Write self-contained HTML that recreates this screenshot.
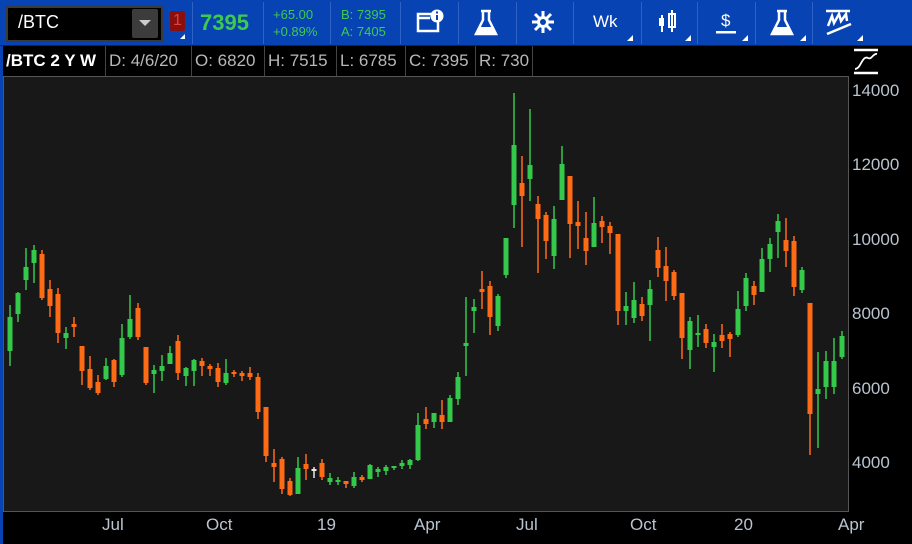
<!DOCTYPE html>
<html><head><meta charset="utf-8"><style>
*{margin:0;padding:0;box-sizing:border-box}
body{width:912px;height:544px;background:#000;position:relative;overflow:hidden;font-family:"Liberation Sans",sans-serif}
.tb{position:absolute;left:0;top:0;width:912px;height:45px;background:#0743b3}
.sep{position:absolute;top:2px;width:1px;height:42px;background:#2f62c4}
.abs{position:absolute}
.tri{position:absolute;width:0;height:0;border-left:6px solid transparent;border-bottom:6px solid #fff}
.r2{position:absolute;top:46px;height:30px;left:3px;width:845px;background:#000}
.cell{position:absolute;top:0;height:30px;line-height:30px;font-size:17px;color:#b8b8b8;border-right:1px solid #444;padding-left:3px}
.yl{position:absolute;left:852px;font-size:17px;color:#b9c4d0}
.xl{position:absolute;top:515px;font-size:17px;color:#b9c4d0}
</style></head><body>
<div class="tb"></div>
<div class="abs" style="left:6px;top:6px;width:157px;height:36px;background:#000;border:2px solid #3a3a3a;border-radius:2px"></div>
<div class="abs" style="left:18px;top:12px;font-size:18px;color:#fff">/BTC</div>
<div class="abs" style="left:132px;top:9px;width:26px;height:29px;background:#3c3c3c;border-radius:2px"></div>
<div class="abs" style="left:139px;top:20px;width:0;height:0;border-left:6px solid transparent;border-right:6px solid transparent;border-top:6px solid #ccc"></div>
<div class="abs" style="left:170px;top:11px;width:15px;height:20px;background:#8a1010;border-radius:2px;color:#e04040;font-size:16px;text-align:center;line-height:20px">1</div>
<div class="tri" style="left:180px;top:34px;border-left-width:5px;border-bottom-width:5px"></div>
<div class="sep" style="left:192px"></div>
<div class="abs" style="left:200px;top:10px;font-size:22px;font-weight:bold;color:#3ec94f">7395</div>
<div class="sep" style="left:263px"></div>
<div class="abs" style="left:273px;top:6px;font-size:13px;color:#3ec94f;line-height:17px">+65.00<br>+0.89%</div>
<div class="sep" style="left:330px"></div>
<div class="abs" style="left:341px;top:6px;font-size:13px;color:#3ec94f;line-height:17px">B: 7395<br>A: 7405</div>
<div class="sep" style="left:400px"></div>
<!-- info icon -->
<svg class="abs" style="left:416px;top:8px" width="30" height="28" viewBox="0 0 30 28"><rect x="2" y="6" width="20" height="17" fill="none" stroke="#fff" stroke-width="2.5"/><line x1="2" y1="10" x2="14" y2="10" stroke="#fff" stroke-width="2.5"/><circle cx="21" cy="8" r="6.5" fill="#fff"/><rect x="20" y="7" width="2" height="5" fill="#0743b3"/><rect x="20" y="3.5" width="2" height="2" fill="#0743b3"/></svg>
<div class="sep" style="left:458px"></div>
<svg class="abs" style="left:472px;top:8px" width="30" height="30" viewBox="0 0 30 30"><path d="M9 3h10M11 3v9L4 26h20L17 12V3" fill="none" stroke="#fff" stroke-width="2.5"/><path d="M7 19h14l4 8H3z" fill="#fff"/></svg>
<div class="sep" style="left:516px"></div>
<svg class="abs" style="left:530px;top:9px" width="26" height="26" viewBox="0 0 26 26"><g stroke="#fff" stroke-width="3"><line x1="13" y1="2" x2="13" y2="24"/><line x1="2" y1="13" x2="24" y2="13"/><line x1="5" y1="5" x2="21" y2="21"/><line x1="21" y1="5" x2="5" y2="21"/></g><circle cx="13" cy="13" r="6" fill="#fff"/><circle cx="13" cy="13" r="3" fill="#0743b3"/></svg>
<div class="sep" style="left:573px"></div>
<div class="abs" style="left:593px;top:12px;font-size:17px;color:#fff">Wk</div>
<div class="tri" style="left:627px;top:35px"></div>
<div class="sep" style="left:641px"></div>
<svg class="abs" style="left:656px;top:10px" width="24" height="26" viewBox="0 0 24 26"><g fill="#fff"><rect x="3" y="8" width="5" height="8"/><rect x="5" y="5" width="2" height="17"/><rect x="13" y="4" width="6" height="13" fill="none" stroke="#fff" stroke-width="2"/><rect x="15" y="0" width="2" height="22"/></g></svg>
<div class="tri" style="left:685px;top:35px"></div>
<div class="sep" style="left:697px"></div>
<svg class="abs" style="left:714px;top:10px" width="26" height="26" viewBox="0 0 26 26"><text x="7" y="16" font-size="17" fill="#fff" font-family="Liberation Sans">$</text><rect x="2" y="21" width="20" height="2.5" fill="#fff"/></svg>
<div class="tri" style="left:742px;top:35px"></div>
<div class="sep" style="left:755px"></div>
<svg class="abs" style="left:768px;top:8px" width="30" height="30" viewBox="0 0 30 30"><path d="M9 3h10M11 3v9L4 26h20L17 12V3" fill="none" stroke="#fff" stroke-width="2.5"/><path d="M7 19h14l4 8H3z" fill="#fff"/></svg>
<div class="tri" style="left:800px;top:35px"></div>
<div class="sep" style="left:812px"></div>
<svg class="abs" style="left:826px;top:8px" width="30" height="30" viewBox="0 0 30 30"><g stroke="#fff" stroke-width="2.5" fill="none"><line x1="0" y1="3" x2="24" y2="3"/><path d="M2 18L6 8l2 7 5-9 2 7 5-7 1 7"/><line x1="1" y1="26" x2="25" y2="16"/></g></svg>
<div class="tri" style="left:857px;top:35px"></div>
<!-- row 2 -->
<div class="abs" style="left:0;top:45px;width:912px;height:1px;background:#222"></div>
<div class="r2">
<div class="cell" style="left:0;width:103px;color:#fff;font-weight:bold">/BTC 2 Y W</div>
<div class="cell" style="left:103px;width:86px">D: 4/6/20</div>
<div class="cell" style="left:189px;width:73px">O: 6820</div>
<div class="cell" style="left:262px;width:72px">H: 7515</div>
<div class="cell" style="left:334px;width:69px">L: 6785</div>
<div class="cell" style="left:403px;width:70px">C: 7395</div>
<div class="cell" style="left:473px;width:57px">R: 730</div>
</div>
<svg class="abs" style="left:852px;top:48px" width="32" height="28" viewBox="0 0 32 28"><g stroke="#fff" stroke-width="2.5" fill="none"><line x1="2" y1="2" x2="26" y2="2"/><line x1="2" y1="25" x2="26" y2="25"/><path d="M3 21C9 21 10 7 16 10c4 2 5-5 9-4" stroke-width="1.8"/></g></svg>
<div class="abs" style="left:0;top:46px;width:3px;height:498px;background:#0743b3"></div>
<!-- chart -->
<svg class="abs" style="left:0;top:0" width="912" height="544" id="ch">
<rect x="3.5" y="76.5" width="845" height="435" fill="#181818" stroke="#555"/>
<g id="cd"></g>
</svg>
<div class="yl" style="top:81px">14000</div>
<div class="yl" style="top:155px">12000</div>
<div class="yl" style="top:230px">10000</div>
<div class="yl" style="top:304px">8000</div>
<div class="yl" style="top:379px">6000</div>
<div class="yl" style="top:453px">4000</div>
<div class="xl" style="left:102px">Jul</div>
<div class="xl" style="left:206px">Oct</div>
<div class="xl" style="left:317px">19</div>
<div class="xl" style="left:414px">Apr</div>
<div class="xl" style="left:516px">Jul</div>
<div class="xl" style="left:630px">Oct</div>
<div class="xl" style="left:734px">20</div>
<div class="xl" style="left:838px">Apr</div>
<script>
var d=[
"g,305,366,317,351","g,292,322,293,314","g,248,290,267,280","g,245,283,250,263","o,250,300,254,298","o,280,317,289,306","o,288,343,294,333","g,327,349,333,338","o,317,337,324,327","o,346,385,346,371",
"o,356,390,369,388","o,375,395,382,393","g,358,380,366,379","o,359,387,360,382","g,324,377,338,375","g,295,339,319,337","o,303,340,308,337","o,347,385,347,383","g,365,393,370,374","g,355,381,366,371",
"g,346,364,353,364","o,335,380,341,373","g,367,386,368,376","g,359,386,360,371","o,358,376,361,366","o,364,376,366,369","o,363,387,368,382","g,359,385,373,383","o,370,377,372,374","o,371,381,373,376",
"o,367,380,373,377","o,373,419,377,412","o,407,462,407,456","o,449,482,463,467","o,457,494,459,489","o,478,496,481,495","g,457,494,468,494","o,454,480,464,469","w,467,478,469,470","o,459,480,463,477",
"g,473,485,478,482","g,477,485,480,482","o,481,488,481,484","g,472,488,477,486","o,475,482,477,480","g,464,479,465,479","g,467,477,469,472","g,465,475,467,471","g,466,470,466,468","g,460,469,463,466",
"g,459,469,460,465","g,413,461,425,460","o,407,429,419,424","g,413,428,413,422","o,400,429,415,422","g,395,422,398,422","g,372,405,377,399","g,297,376,343,346","g,299,333,307,311","o,271,309,289,292",
"o,281,335,286,317","g,294,331,296,326","g,238,278,238,275","g,93,228,145,205","o,156,247,183,196","g,109,201,165,179","o,196,273,204,219","o,212,259,215,241","g,206,269,219,256","g,146,200,164,200",
"o,176,258,176,224","o,201,249,222,226","o,212,265,238,251","g,197,247,223,247","o,216,243,221,227","o,222,254,226,233","o,234,325,234,311","g,292,325,306,311","g,282,323,300,318","o,297,321,304,316",
"g,280,341,289,305","o,237,277,250,268","o,247,301,266,281","o,270,300,272,296","o,293,359,293,338","g,317,369,321,350","g,315,347,333,334","o,324,348,329,343","g,334,372,342,347","o,324,348,335,341",
"o,332,357,334,339","g,291,337,309,335","g,273,311,278,306","o,281,305,286,295","g,248,292,259,292","g,238,272,244,259","g,214,258,221,232","o,218,267,240,251","o,236,296,241,287","g,267,293,270,290",
"o,303,455,303,414","g,352,448,389,394","g,351,399,361,387","g,338,394,361,387","g,331,359,336,357"];
var c={g:"#33c94a",o:"#ff6a14",w:"#e8e8e8"},s="";
d.forEach(function(r,i){var a=r.split(","),x=10+8*i,f=c[a[0]];var wt=+a[1],wb=+a[2],bt=+a[3],bb=+a[4];if(bb-bt<2)bb=bt+2;
s+='<rect x="'+(x-0.75)+'" y="'+wt+'" width="1.5" height="'+(wb-wt)+'" fill="'+f+'"/><rect x="'+(x-2.5)+'" y="'+bt+'" width="5" height="'+(bb-bt)+'" fill="'+f+'"/>';});
document.getElementById("cd").innerHTML=s;
</script>
</body></html>
